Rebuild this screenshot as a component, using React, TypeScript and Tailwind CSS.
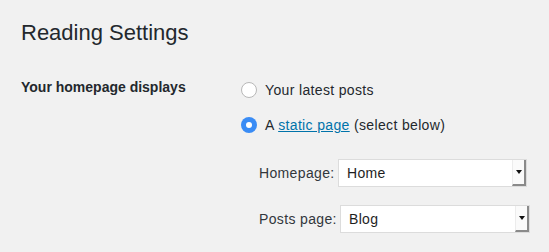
import React from "react";

function Radio({ checked }: { checked?: boolean }) {
  if (checked) {
    return (
      <span className="flex h-4 w-4 shrink-0 items-center justify-center rounded-full bg-[#3a8cf5]">
        <span className="h-[6px] w-[6px] rounded-full bg-white" />
      </span>
    );
  }
  return <span className="h-4 w-4 shrink-0 rounded-full border border-[#b8b8b8] bg-white" />;
}

function Select({ value, width }: { value: string; width: string }) {
  return (
    <div className={`flex h-[28px] ${width} border border-[#dcdcdc] bg-white`}>
      <span className="flex flex-1 items-center pl-[8px] text-[14px] tracking-[0.3px] text-[#1e1e1e]">{value}</span>
      <div className="flex w-[14px] items-center justify-center border-r-2 border-b-2 border-l border-r-[#8a8a8a] border-b-[#8a8a8a] border-l-[#ececec] bg-[#fafafa]">
        <span className="h-0 w-0 border-x-[3px] border-t-[4px] border-x-transparent border-t-[#111]" />
      </div>
    </div>
  );
}

export default function App() {
  return (
    <div className="min-h-screen bg-[#f1f1f1] pl-[21px] font-['Liberation_Sans',Arial,sans-serif] text-[#23282d]">
      <h1 className="pt-[18px] text-[22px] leading-[29px] font-normal">Reading Settings</h1>
      <div className="mt-[30px] flex">
        <div className="w-[220px] shrink-0 text-[14px] leading-[20px] font-bold">Your homepage displays</div>
        <div className="pt-[3px] text-[14px] leading-[20px] tracking-[0.35px]">
          <div className="flex items-center gap-[8px]">
            <Radio />
            <span>Your latest posts</span>
          </div>
          <div className="mt-[15px] flex items-center gap-[8px]">
            <Radio checked />
            <span>
              A <a className="text-[#0073aa] underline">static page</a> (select below)
            </span>
          </div>
          <div className="mt-[24px] flex flex-col gap-[18px] pl-[18px]">
            <div className="flex items-center">
              <span className="w-[79px] text-[#32373c]">Homepage:</span>
              <Select value="Home" width="w-[189px]" />
            </div>
            <div className="flex items-center">
              <span className="w-[81px] text-[#32373c]">Posts page:</span>
              <Select value="Blog" width="w-[190px]" />
            </div>
          </div>
        </div>
      </div>
    </div>
  );
}
